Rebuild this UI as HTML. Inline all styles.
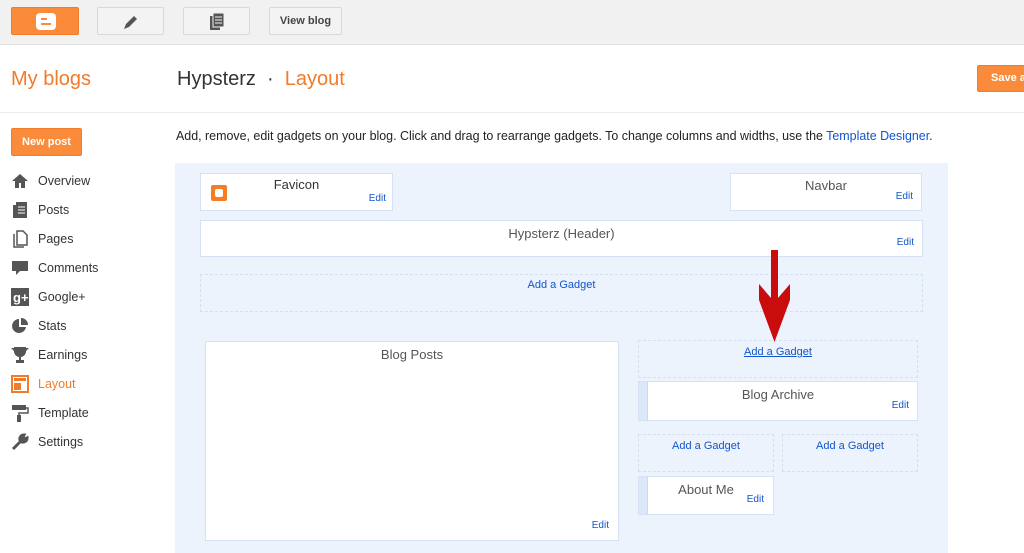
<!DOCTYPE html>
<html><head><style>
*{margin:0;padding:0;box-sizing:border-box}
body{width:1024px;height:548px;overflow:hidden;background:#fff;font-family:"Liberation Sans",Arial,sans-serif;position:relative;color:#222}
.a{position:absolute}
.top{left:0;top:0;width:1024px;height:45px;background:#f1f1f1;border-bottom:1px solid #e3e3e3}
.btn{position:absolute;top:7px;height:28px;border:1px solid #d9d9d9;background:#f3f3f3;border-radius:2px}
.or{background:#f98b3b;border-color:#ef7d2a}
.nav{position:absolute;left:38px;font-size:12.5px;color:#333}
.ic{position:absolute;left:11px;width:18px;height:18px}
.g{position:absolute;background:#fff;border:1px solid #d6e2f3}
.d{position:absolute;border:1px dashed #d4dff0}
.t{position:absolute;width:100%;text-align:center;font-size:13px;color:#555}
.e{position:absolute;font-size:10px;color:#1155cc}
.ag{position:absolute;width:100%;text-align:center;font-size:11px;color:#1155cc}
.h{position:absolute;left:0;top:0;bottom:0;width:9px;background:#dbe8fa;border-right:1px solid #c9dbf3}
</style></head><body>
<div class="a top"></div>
<div class="btn or" style="left:11px;width:68px"><div class="a" style="left:24px;top:5px;width:20px;height:17px;background:#fff;border-radius:4px"><div class="a" style="left:5px;top:5px;width:6px;height:2px;background:#f98b3b"></div><div class="a" style="left:5px;top:10px;width:10px;height:2px;background:#f98b3b"></div></div></div>
<div class="btn" style="left:97px;width:67px"><svg class="a" style="left:24px;top:6px" width="18" height="16"><path d="M2 15 L4 10 L12 2 L15 5 L7 13 Z" fill="#555"/></svg></div>
<div class="btn" style="left:183px;width:67px"><svg class="a" style="left:25px;top:5px" width="16" height="18"><rect x="1" y="3" width="10" height="14" fill="#555"/><rect x="4" y="0" width="11" height="14" fill="#555" stroke="#f3f3f3"/><path d="M6 4h7M6 7h7M6 10h7" stroke="#f3f3f3"/></svg></div>
<div class="btn" style="left:269px;width:73px;font-size:11px;font-weight:bold;color:#444;text-align:center;line-height:26px">View blog</div>
<div class="a" style="left:0;top:112px;width:1024px;height:1px;background:#ebebeb"></div>
<div class="a" style="left:11px;top:68px;font-size:20px;color:#f07b2c">My blogs</div>
<div class="a" style="left:177px;top:68px;font-size:20px;color:#333">Hypsterz &nbsp;·&nbsp; <span style="color:#f07b2c">Layout</span></div>
<div class="a or" style="left:977px;top:65px;width:60px;height:27px;border-radius:2px;border:1px solid #ef7d2a;background:#f98b3b;color:#fff;font-size:11px;font-weight:bold;line-height:25px;padding-left:13px">Save a</div>
<div class="a" style="left:11px;top:128px;width:71px;height:28px;background:#f98b3b;border:1px solid #ef7d2a;border-radius:2px;color:#fff;font-size:11px;font-weight:bold;text-align:center;line-height:26px">New post</div>
<svg class="ic" style="top:172px" viewBox="0 0 18 18"><path d="M9 2L1 9h3v7h4v-5h2v5h4V9h3z" fill="#555"/></svg>
<div class="nav" style="top:174px">Overview</div>
<svg class="ic" style="top:201px" viewBox="0 0 18 18"><rect x="2" y="4" width="3" height="13" fill="#555"/><rect x="5" y="1" width="11" height="16" fill="#555"/><path d="M7 6h7M7 9h7M7 12h7" stroke="#fff"/></svg>
<div class="nav" style="top:203px">Posts</div>
<svg class="ic" style="top:230px" viewBox="0 0 18 18"><path d="M3 4v13h10M6 1h6l4 4v10H6z" fill="none" stroke="#555" stroke-width="1.5"/></svg>
<div class="nav" style="top:232px">Pages</div>
<svg class="ic" style="top:259px" viewBox="0 0 18 18"><path d="M1 2h16v10h-8l-4 4v-4H1z" fill="#555"/></svg>
<div class="nav" style="top:261px">Comments</div>
<svg class="ic" style="top:288px" viewBox="0 0 18 18"><rect x="0" y="0" width="19" height="19" fill="#555"/><text x="2" y="14" font-size="13" fill="#fff" font-weight="bold">g+</text></svg>
<div class="nav" style="top:290px">Google+</div>
<svg class="ic" style="top:317px" viewBox="0 0 18 18"><path d="M8 2a7 7 0 1 0 7 8H8z" fill="#555"/><path d="M10 1v7h7a7 7 0 0 0-7-7z" fill="#555"/></svg>
<div class="nav" style="top:319px">Stats</div>
<svg class="ic" style="top:346px" viewBox="0 0 18 18"><path d="M3 1h12v5a6 6 0 0 1-5 5v3h3v3H5v-3h3v-3a6 6 0 0 1-5-5z M0 2h3v3M18 2h-3v3" fill="#555"/></svg>
<div class="nav" style="top:348px">Earnings</div>
<svg class="ic" style="top:375px" viewBox="0 0 18 18"><rect x="1" y="1" width="16" height="16" fill="none" stroke="#f07b2c" stroke-width="2"/><rect x="3" y="3" width="12" height="3" fill="#f07b2c"/><rect x="3" y="8" width="7" height="7" fill="#f07b2c"/></svg>
<div class="nav" style="top:377px;color:#f07b2c">Layout</div>
<svg class="ic" style="top:404px" viewBox="0 0 18 18"><rect x="1" y="1" width="14" height="5" fill="#555"/><path d="M15 4h2v5H8v2" fill="none" stroke="#555" stroke-width="1.5"/><rect x="6" y="11" width="4" height="7" fill="#555"/></svg>
<div class="nav" style="top:406px">Template</div>
<svg class="ic" style="top:433px" viewBox="0 0 18 18"><path d="M2 16L10 8M13 2a4 4 0 0 0-4 5l2 2a4 4 0 0 0 5-4l-2 1-2-2z" stroke="#555" stroke-width="3" fill="#555"/></svg>
<div class="nav" style="top:435px">Settings</div>
<div class="a" style="left:176px;top:129px;font-size:12.45px;color:#222;white-space:nowrap">Add, remove, edit gadgets on your blog. Click and drag to rearrange gadgets. To change columns and widths, use the <span style="color:#1155cc">Template Designer</span>.</div>
<div class="a" style="left:175px;top:163px;width:773px;height:390px;background:#edf3fd"></div>
<div class="g" style="left:200px;top:173px;width:193px;height:38px"><div class="t" style="top:3px;color:#333">Favicon</div><div class="a" style="left:10px;top:11px;width:16px;height:16px;background:#f57d22;border-radius:2px"><div class="a" style="left:4px;top:4px;width:8px;height:8px;background:#fff;border-radius:2px"></div></div><div class="e" style="right:6px;top:19px">Edit</div></div>
<div class="g" style="left:730px;top:173px;width:192px;height:38px"><div class="t" style="top:4px">Navbar</div><div class="e" style="right:8px;top:17px">Edit</div></div>
<div class="g" style="left:200px;top:220px;width:723px;height:37px"><div class="t" style="top:5px">Hypsterz (Header)</div><div class="e" style="right:8px;top:16px">Edit</div></div>
<div class="d" style="left:200px;top:274px;width:723px;height:38px"><div class="ag" style="top:4px">Add a Gadget</div></div>
<div class="g" style="left:205px;top:341px;width:414px;height:200px"><div class="t" style="top:5px">Blog Posts</div><div class="e" style="right:9px;top:178px">Edit</div></div>
<div class="d" style="left:638px;top:340px;width:280px;height:38px"><div class="ag" style="top:5px;text-decoration:underline">Add a Gadget</div></div>
<div class="g" style="left:638px;top:381px;width:280px;height:40px"><div class="h"></div><div class="t" style="top:5px">Blog Archive</div><div class="e" style="right:8px;top:18px">Edit</div></div>
<div class="d" style="left:638px;top:434px;width:136px;height:38px"><div class="ag" style="top:5px">Add a Gadget</div></div>
<div class="d" style="left:782px;top:434px;width:136px;height:38px"><div class="ag" style="top:5px">Add a Gadget</div></div>
<div class="g" style="left:638px;top:476px;width:136px;height:39px"><div class="h"></div><div class="t" style="top:5px">About Me</div><div class="e" style="right:9px;top:17px">Edit</div></div>
<svg class="a" style="left:755px;top:250px" width="40" height="95"><path d="M16 0h7v48l12-14v16L19.5 92 4 50V34l12 14z" fill="#c90d0d"/></svg>
</body></html>
